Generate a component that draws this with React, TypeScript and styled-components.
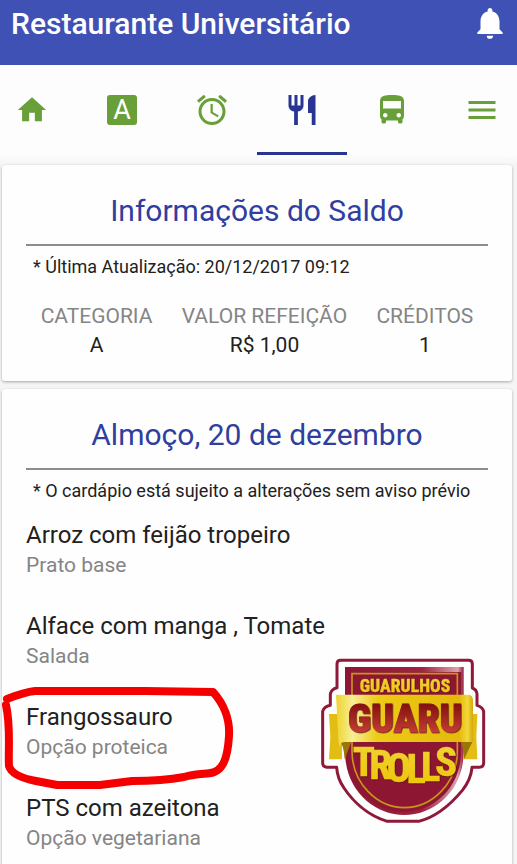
import React from "react";
import styled, { createGlobalStyle } from "styled-components";
import {
  MdAlarm,
  MdDirectionsBus,
  MdMenu,
  MdNotifications,
  MdRestaurant,
} from "react-icons/md";

const GlobalStyle = createGlobalStyle`
  *, *::before, *::after { box-sizing: border-box; }
  html { height: 100%; overflow: hidden; }
  body {
    margin: 0;
    background: #f6f6f6;
    color: #212121;
    font-family: Roboto, "Liberation Sans", sans-serif;
  }
  button { font: inherit; }
`;

const Header = styled.header`
  display: flex;
  justify-content: space-between;
  align-items: flex-start;
  height: 65px;
  padding: 4px 8px 0 11px;
  background: #3f51b5;
  color: #fff;
`;

const Title = styled.h1`
  margin: 0;
  font-size: 30px;
  line-height: 40px;
  font-weight: 500;
`;

const BellButton = styled.button`
  display: flex;
  padding: 0;
  border: 0;
  background: none;
  color: #fff;
`;

const TabBar = styled.nav`
  overflow: hidden;
  background: #fdfdfd;
`;

const Tabs = styled.div`
  display: flex;
  margin: 0 -10px 0 -13px;
`;

const Tab = styled.a<{ $active?: boolean }>`
  flex: 1;
  display: flex;
  align-items: center;
  justify-content: center;
  height: 90px;
  border-bottom: 3px solid ${(p) => (p.$active ? "#283593" : "transparent")};
  border-top: 3px solid transparent;
  color: ${(p) => (p.$active ? "#283593" : "#689f38")};
  text-decoration: none;
`;

const LetterBox = styled.span`
  width: 30px;
  height: 30px;
  border-radius: 3px;
  background: #689f38;
  color: #fff;
  font-size: 27px;
  line-height: 31px;
  text-align: center;
`;

const Content = styled.main`
  display: flex;
  flex-direction: column;
  gap: 8px;
  padding: 10px 5px 0 2px;
  background: linear-gradient(#fdfdfd, #f5f5f5 10px);
`;

const Card = styled.section`
  position: relative;
  padding: 24px 24px 21px;
  border-radius: 3px;
  background: #fefefe;
  box-shadow: 0 1px 3px rgba(0, 0, 0, 0.32);
`;

const CardTitle = styled.h2`
  margin: 0;
  padding-bottom: 12px;
  border-bottom: 2px solid #8c8c8c;
  color: #303f9f;
  font-size: 30px;
  line-height: 43px;
  font-weight: 400;
  text-align: center;
`;

const Note = styled.p`
  margin: 0;
  padding: 7px 7px 1px;
  font-size: 18px;
  line-height: 28px;
  white-space: nowrap;
`;

const Facts = styled.dl`
  display: flex;
  justify-content: space-around;
  margin: 20px 0 0;
  font-size: 21px;
  line-height: 29px;
  text-align: center;
`;

const Term = styled.dt`
  color: #858585;
`;

const Value = styled.dd`
  margin: 0;
`;

const Menu = styled.ul`
  display: flex;
  flex-direction: column;
  gap: 30px;
  margin: 13px 0 0;
  padding: 0;
  list-style: none;
`;

const Dish = styled.li`
  position: relative;
`;

const DishName = styled.div`
  font-size: 24px;
  line-height: 32px;
`;

const DishKind = styled.div`
  color: #858585;
  font-size: 21px;
  line-height: 29px;
`;

const Scribble = styled.svg`
  position: absolute;
  left: -26px;
  top: -19px;
`;

const Sticker = styled.svg`
  position: absolute;
  right: 12px;
  top: 261px;
`;

const HomeIcon = () => (
  <svg width="34" height="34" viewBox="0 0 24 24" fill="currentColor" aria-hidden="true">
    <path d="M10 20v-6h4v6h5v-8h3L12 3 2 12h3v8z" />
  </svg>
);

const HandCircle = () => (
  <Scribble width="240" height="120" viewBox="0 0 240 120" fill="none" aria-hidden="true">
    <path
      d="M7 17C17 13 25 10 35 9H145L213 10C224 22 230 38 229 54C228 70 226 79 221 85C213 95 204 89 184 95C168 98 150 99 132 99L100 103H57L36 99C20 96 11 91 9 84C8 68 11 45 6 23"
      stroke="#f50000"
      strokeWidth="8"
      strokeLinecap="round"
      strokeLinejoin="round"
    />
  </Scribble>
);

const LogoText = styled.text`
  font-family: "Liberation Sans Narrow", "Roboto Condensed", "Open Sans Condensed", Roboto, sans-serif;
  font-weight: 800;
  text-anchor: middle;
  stroke-linejoin: miter;
  filter: drop-shadow(2px 2px 1px #5f0e1e);
`;

const GuaruLogo = () => (
  <Sticker width="190" height="180" viewBox="0 0 570 540" role="img" aria-label="Guarulhos Guaru Trolls">
    <defs>
      <linearGradient id="band" x1="0" x2="1" y1="0" y2="0">
        <stop offset="0" stopColor="#eed32c" />
        <stop offset="0.12" stopColor="#f8ee96" />
        <stop offset="0.3" stopColor="#edcb17" />
        <stop offset="0.9" stopColor="#e5b90b" />
        <stop offset="0.96" stopColor="#f2d83b" />
        <stop offset="1" stopColor="#d4a80b" />
      </linearGradient>
      <linearGradient id="gold" x1="0" x2="0" y1="0" y2="1">
        <stop offset="0" stopColor="#f1d43a" />
        <stop offset="1" stopColor="#ecc400" />
      </linearGradient>
      <linearGradient id="wine" x1="0" x2="0" y1="0" y2="1">
        <stop offset="0.2" stopColor="#84110f" />
        <stop offset="0.9" stopColor="#cf453b" />
      </linearGradient>
      <linearGradient id="rim" x1="0" x2="1" y1="0" y2="0">
        <stop offset="0" stopColor="#8b1735" />
        <stop offset="0.65" stopColor="#9d2440" />
        <stop offset="0.95" stopColor="#dda0af" />
        <stop offset="1" stopColor="#951d3a" />
      </linearGradient>
    </defs>
    <path
      d="M92 31H476Q487 31 487 42V114Q500 119 501 132V166Q518 171 521 184V340Q521 351 508 352H486Q483 388 457 421C423 462 382 500 326 514H232C170 495 126 450 102 414Q82 385 80 352H50Q38 350 38 340V184Q42 170 61 166V132Q64 117 81 113V42Q81 31 92 31Z"
      fill="#fff"
      stroke="#8f1938"
      strokeWidth="9"
      strokeLinejoin="round"
    />
    <path d="M105 51H461V305C461 420 374 495 283 495C192 495 105 420 105 305Z" fill="url(#rim)" />
    <path d="M108 66H454V302C454 412 370 486 281 486C193 486 108 412 108 302Z" fill="#8d1733" />
    <path
      d="M126 71H442V302C442 402 364 473 283 473C203 473 126 402 126 302Z"
      fill="none"
      stroke="#c9941d"
      strokeWidth="5"
    />
    <path d="M57 192H96V328H57L61 260Z" fill="#e3bd14" />
    <path d="M472 192H502L499 260L502 328H462Z" fill="#e3bd14" />
    <path d="M88 270H126L104 328Q101 282 88 274Z" fill="#9c7507" />
    <path d="M450 270H490L462 328Q462 296 450 270Z" fill="#9c7507" />
    <path d="M78 134H476Q488 135 489 150V276H104Q90 276 90 292Q84 278 84 250Z" fill="url(#band)" />
    <LogoText x="285" y="126" fontSize="53" fill="url(#gold)" stroke="#eed02e" strokeWidth="1">
      GUARULHOS
    </LogoText>
    <LogoText x="285" y="246" fontSize="119" fill="url(#wine)" stroke="url(#wine)" strokeWidth="3">
      GUARU
    </LogoText>
    <LogoText
      x="162 212 266 319 362 408"
      y="377 388 396 399 392 378"
      fontSize="122"
      fill="url(#gold)"
      stroke="#eeca14"
      strokeWidth="1"
    >
      TROLLS
    </LogoText>
  </Sticker>
);

const facts = [
  ["CATEGORIA", "A"],
  ["VALOR REFEIÇÃO", "R$ 1,00"],
  ["CRÉDITOS", "1"],
];

const dishes = [
  { name: "Arroz com feijão tropeiro", kind: "Prato base" },
  { name: "Alface com manga , Tomate", kind: "Salada" },
  { name: "Frangossauro", kind: "Opção proteica", circled: true },
  { name: "PTS com azeitona", kind: "Opção vegetariana" },
];

export default function App() {
  return (
    <>
      <GlobalStyle />
      <Header>
        <Title>Restaurante Universitário</Title>
        <BellButton type="button" aria-label="Notificações">
          <MdNotifications size={38} />
        </BellButton>
      </Header>
      <TabBar>
        <Tabs>
          <Tab href="#inicio" aria-label="Início"><HomeIcon /></Tab>
          <Tab href="#avaliacoes" aria-label="Avaliações"><LetterBox>A</LetterBox></Tab>
          <Tab href="#horarios" aria-label="Horários"><MdAlarm size={36} /></Tab>
          <Tab href="#restaurante" aria-label="Restaurante" aria-current="page" $active>
            <MdRestaurant size={36} />
          </Tab>
          <Tab href="#onibus" aria-label="Ônibus"><MdDirectionsBus size={36} /></Tab>
          <Tab href="#menu" aria-label="Menu"><MdMenu size={36} /></Tab>
        </Tabs>
      </TabBar>
      <Content>
        <Card>
          <CardTitle>Informações do Saldo</CardTitle>
          <Note>* Última Atualização: 20/12/2017 09:12</Note>
          <Facts>
            {facts.map(([term, value]) => (
              <div key={term}>
                <Term>{term}</Term>
                <Value>{value}</Value>
              </div>
            ))}
          </Facts>
        </Card>
        <Card>
          <CardTitle>Almoço, 20 de dezembro</CardTitle>
          <Note>* O cardápio está sujeito a alterações sem aviso prévio</Note>
          <Menu>
            {dishes.map((dish) => (
              <Dish key={dish.name}>
                <DishName>{dish.name}</DishName>
                <DishKind>{dish.kind}</DishKind>
                {dish.circled && <HandCircle />}
              </Dish>
            ))}
          </Menu>
          <GuaruLogo />
        </Card>
      </Content>
    </>
  );
}
